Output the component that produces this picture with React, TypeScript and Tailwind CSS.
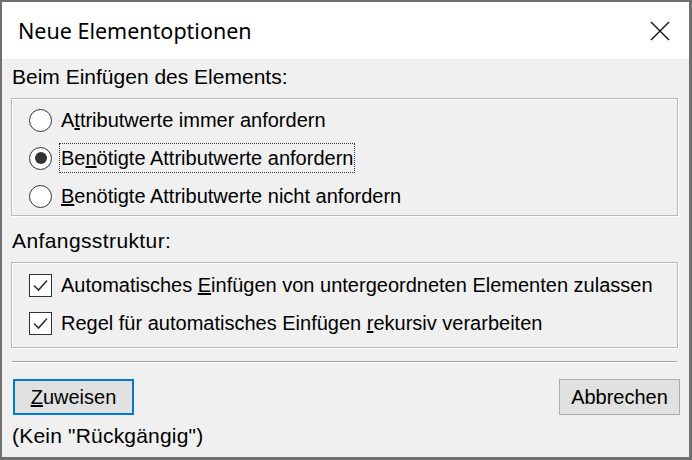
import React from "react";

const F = { fontFamily: '"Liberation Sans", Arial, sans-serif' };

function Radio({ checked }: { checked?: boolean }) {
  return (
    <span className="w-[23px] h-[23px] rounded-full border-[1.5px] border-[#333] bg-white flex items-center justify-center shrink-0">
      {checked && <span className="w-[12px] h-[12px] rounded-full bg-[#333]" />}
    </span>
  );
}

function Check() {
  return (
    <span className="w-[23px] h-[23px] border-[1.5px] border-[#333] bg-white flex items-center justify-center shrink-0">
      <svg width="17" height="17" viewBox="0 0 17 17">
        <path d="M2 8.5 L6.5 13 L15 3.5" fill="none" stroke="#333" strokeWidth="1.6" />
      </svg>
    </span>
  );
}

export default function App() {
  return (
    <div
      className="w-[692px] h-[460px] bg-[#f0f0f0] border-l-2 border-t-2 border-r-[3px] border-b-[3px] border-[#707070] flex flex-col text-black text-[20px] leading-[24px]"
      style={F}
    >
      <div className="h-[57px] bg-white flex items-center justify-between pl-4 pr-[19px] shrink-0">
        <span className="text-[21.5px] text-black" style={{ fontFamily: '"Noto Sans", "Open Sans", sans-serif' }}>
          Neue Elementoptionen
        </span>
        <svg width="20" height="20" viewBox="0 0 20 20">
          <path d="M1 1 L19 19 M19 1 L1 19" stroke="#111" strokeWidth="1.4" fill="none" />
        </svg>
      </div>
      <div className="flex flex-col pl-[9px] pr-[11px] pt-[6px]">
        <div className="pl-px h-[24px] text-[21px]">Beim Einfügen des Elements:</div>
        <div className="mt-[9px] border border-[#b9b9b9] shadow-[1px_1px_0_#fff,inset_1px_1px_0_#fff] pt-[2px] pl-[17px]">
          <div className="h-[38px] flex items-center gap-[9px]">
            <Radio />
            <span>A<u>t</u>tributwerte immer anfordern</span>
          </div>
          <div className="h-[38px] flex items-center gap-[7px]">
            <Radio checked />
            <span className="border border-dotted border-[#333] px-px py-[2px]">
              Be<u>n</u>ötigte Attributwerte anfordern
            </span>
          </div>
          <div className="h-[38px] flex items-center gap-[9px]">
            <Radio />
            <span><u>B</u>enötigte Attributwerte nicht anfordern</span>
          </div>
        </div>
        <div className="pl-px h-[24px] mt-[13px] text-[21px] tracking-[0.4px]">Anfangsstruktur:</div>
        <div className="mt-[9px] border border-[#b9b9b9] shadow-[1px_1px_0_#fff,inset_1px_1px_0_#fff] pt-[3px] pb-[5px] pl-[17px]">
          <div className="h-[38px] flex items-center gap-[9px]">
            <Check />
            <span className="whitespace-nowrap">Automatisches <u>E</u>infügen von untergeordneten Elementen zulassen</span>
          </div>
          <div className="h-[38px] flex items-center gap-[9px]">
            <Check />
            <span>Regel für automatisches Einfügen <u>r</u>ekursiv verarbeiten</span>
          </div>
        </div>
        <div className="mt-[13px] h-[2px] border-t border-[#a0a0a0] border-b border-b-white mx-px" />
        <div className="mt-[16px] flex justify-between items-center">
          <button className="w-[121px] h-[36px] border-2 border-[#0078d7] bg-[#e1e1e1] flex items-center justify-center ml-[2px]">
            <span className="px-1"><u>Z</u>uweisen</span>
          </button>
          <button className="w-[121px] h-[36px] border border-[#adadad] bg-[#e1e1e1] flex items-center justify-center -mr-[2px]">
            Abbrechen
          </button>
        </div>
        <div className="mt-[9px] pl-px text-[21px] tracking-[0.2px]">(Kein "Rückgängig")</div>
      </div>
    </div>
  );
}
